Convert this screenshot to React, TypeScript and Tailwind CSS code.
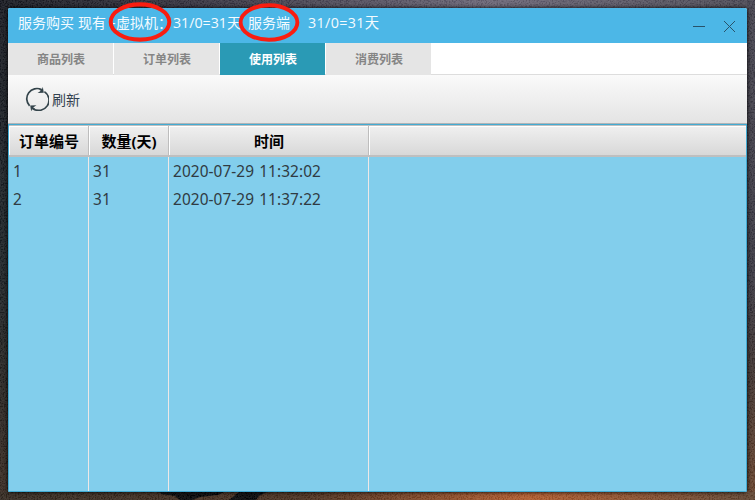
import React from "react";

const tabs = ["商品列表", "订单列表", "使用列表", "消费列表"];
const rows = [
  ["1", "31", "2020-07-29 11:32:02"],
  ["2", "31", "2020-07-29 11:37:22"],
];
const grid = "grid grid-cols-[80px_80px_200px_1fr]";

function Ring({ className }: { className: string }) {
  return (
    <svg className={className} viewBox="0 0 64 38" preserveAspectRatio="none" fill="none">
      <ellipse cx="32" cy="19" rx="29.3" ry="16.8" stroke="#f91d10" strokeWidth="4" />
    </svg>
  );
}

function Desktop() {
  return (
    <svg className="absolute inset-0 h-[500px] w-[755px]" viewBox="0 0 755 500">
      <defs>
        <linearGradient id="top">
          <stop offset="0" stopColor="#17191f" />
          <stop offset=".3" stopColor="#3b3844" />
          <stop offset=".65" stopColor="#6b6676" />
          <stop offset="1" stopColor="#4c4a54" />
        </linearGradient>
        <linearGradient id="left" x2="0" y2="1">
          <stop offset="0" stopColor="#17191f" />
          <stop offset=".5" stopColor="#1b2225" />
          <stop offset=".75" stopColor="#252320" />
          <stop offset="1" stopColor="#3a2b20" />
        </linearGradient>
        <linearGradient id="right" x2="0" y2="1">
          <stop offset="0" stopColor="#45434e" />
          <stop offset=".55" stopColor="#393740" />
          <stop offset=".75" stopColor="#40332e" />
          <stop offset="1" stopColor="#6a432a" />
        </linearGradient>
        <linearGradient id="bottom">
          <stop offset="0" stopColor="#33291f" />
          <stop offset=".4" stopColor="#4a2f1d" />
          <stop offset=".7" stopColor="#b55c2b" />
          <stop offset="1" stopColor="#60442f" />
        </linearGradient>
        <filter id="grain" x="0" y="0" width="100%" height="100%">
          <feTurbulence type="fractalNoise" baseFrequency=".65" numOctaves="2" seed="4" />
          <feColorMatrix values="2.5 0 0 0 -.9  2.5 0 0 0 -.9  2.5 0 0 0 -.85  0 0 0 0 1" />
        </filter>
      </defs>
      <path fill="url(#top)" d="M0 0h755v8H0z" />
      <path fill="url(#left)" d="M0 0h8v500H0z" />
      <path fill="url(#right)" d="M747 0h8v500h-8z" />
      <path fill="url(#bottom)" d="M0 492h755v8H0z" />
      <path fill="#050505" d="M160 492h64l-6 3-18 2-8 3h-12l-5-4-14-2zM229 500l5-4 5-4h28l-8 4-3 4z" />
      <rect width="755" height="500" filter="url(#grain)" opacity=".1" />
    </svg>
  );
}

export default function App() {
  return (
    <main className="relative h-[500px] w-[755px] overflow-hidden bg-[#25252b] p-2 font-['Noto_Sans','Noto_Sans_CJK_SC',sans-serif]">
      <Desktop />
      <section className="relative flex h-[484px] w-[739px] flex-col overflow-hidden rounded-[2px] bg-white shadow-[0_0_4px_#000]">
        <header className="flex h-[35px] shrink-0 items-center bg-[#4cb7e7] text-[#f4fbff]">
          <h1 className="flex whitespace-nowrap pb-[5px] pl-[10px] font-['Open_Sans','Noto_Sans_CJK_SC',sans-serif] text-[14px] font-normal leading-[20px]">
            <span className="w-[60px]">服务购买</span>
            <span className="w-[33px]">现有</span>
            <span className="w-[5px]">-</span>
            <span className="w-[57px]">虚拟机：</span>
            <span className="w-[75px] text-[14.2px]">31/0=31天</span>
            <span className="w-[60px]">服务端</span>
            <span className="text-[14.3px] tracking-[0.35px]">31/0=31天</span>
          </h1>
          <svg className="ml-auto mr-[11px] h-[35px] w-[44px]" viewBox="0 0 44 35" stroke="#28536a" fill="none">
            <path d="M1 18.5h12M32 13l11 11M43 13 32 24" />
          </svg>
        </header>
        <nav className="flex h-8 shrink-0 gap-px border-b border-[#dddddd] bg-white">
          {tabs.map((tab, i) => (
            <div key={tab} className={`flex h-8 w-[105px] items-center justify-center pl-px pt-px text-xs font-bold ${i === 2 ? "bg-[#2a9ab5] text-white" : "bg-[#e5e5e5] text-[#858585]"}`}>
              {tab}
            </div>
          ))}
        </nav>
        <div className="flex h-[49px] shrink-0 items-center border-b border-[#aeb3b6] bg-linear-to-b from-[#fafafa] to-[#e4e4e4] pl-[17px] text-sm text-[#334250]">
          <svg className="mr-[3px] h-6 w-6" viewBox="0 0 24 24" fill="none" stroke="#34444b" strokeWidth="1.7">
            <path d="M4.6 18.8A10.2 10.2 0 0 1 16.5 2.6M19.4 4.6A10.2 10.2 0 0 1 8 21.7" />
            <path fill="#34444b" stroke="none" d="m17.8-.2 1 6-6.2.2 3.2-2.2-2-1.3 3.3-.6zM6.2 24.5l-1-6 6.2-.2-3.2 2.2 2 1.3-3.3.6z" />
          </svg>
          <span className="pt-px">刷新</span>
        </div>
        <div className="flex min-h-0 flex-1 flex-col border border-[#42abd3] bg-[#82ceec]">
          <div className={`${grid} h-8 shrink-0 border-b-2 border-t border-[#bfbfbf] bg-linear-to-b from-[#f0f0f0] to-[#d8d8d8] text-[15px] font-bold text-black`}>
            {["订单编号", "数量(天)", "时间", ""].map((title) => (
              <div key={title} className="flex items-center justify-center border-r border-[#bdbdbd] pl-px pt-px shadow-[inset_1px_1px_#ffffff] last:border-r-0">{title}</div>
            ))}
          </div>
          <div className={`${grid} flex-1 text-[15.4px] text-[#303b42]`}>
            {[0, 1, 2, 3].map((column) => (
              <div key={column} className="border-r border-[#eee8e7] pl-1 pt-px last:border-r-0">
                {rows.map((row) => (
                  <div key={row[0]} className="h-7 whitespace-nowrap leading-7 tracking-[0.08px] [word-spacing:1px]">{row[column]}</div>
                ))}
              </div>
            ))}
          </div>
        </div>
      </section>
      <Ring className="absolute left-[108px] top-[2px] h-[40px] w-[64px]" />
      <Ring className="absolute left-[238px] top-[3px] h-[39px] w-[62px]" />
    </main>
  );
}
